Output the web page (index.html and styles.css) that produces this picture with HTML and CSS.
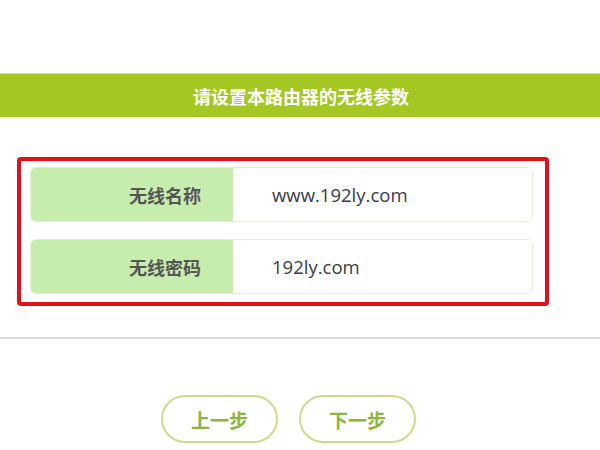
FILE: index.html
```html
<!DOCTYPE html>
<html lang="zh-CN">
<head>
<meta charset="utf-8">
<link rel="stylesheet" href="styles.css">
</head>
<body>
<div class="page">
  <div class="header">请设置本路由器的无线参数</div>
  <div class="frame">
    <div class="row">
      <div class="label">无线名称</div>
      <div class="value">www.192ly.com</div>
    </div>
    <div class="row">
      <div class="label">无线密码</div>
      <div class="value">192ly.com</div>
    </div>
  </div>
  <div class="sep"></div>
  <div class="buttons">
    <div class="btn">上一步</div>
    <div class="btn">下一步</div>
  </div>
</div>
</body>
</html>
```
FILE: styles.css
```css
html, body {
  margin: 0;
  padding: 0;
  background: #ffffff;
}
.page {
  width: 600px;
  height: 450px;
  overflow: hidden;
  padding-top: 73px;
  box-sizing: border-box;
  font-family: "Noto Sans CJK SC", "Noto Sans", sans-serif;
}
.header {
  height: 44px;
  background: #a5c722;
  border-top: 1px solid #cfe08e;
  box-sizing: border-box;
  color: #ffffff;
  font-weight: bold;
  font-size: 18px;
  display: flex;
  align-items: center;
  justify-content: center;
  padding-left: 2px;
}
.frame {
  margin: 40px 0 0 17px;
  width: 532px;
  box-sizing: border-box;
  border: 4px solid #e0101a;
  border-radius: 4px;
  padding: 6px 12px 8px 9px;
  display: flex;
  flex-direction: column;
  gap: 17px;
}
.row {
  display: flex;
  height: 55px;
  box-sizing: border-box;
  border: 1px solid #e3eedb;
  border-radius: 6px;
  overflow: hidden;
}
.label {
  width: 202px;
  background: #c6edae;
  color: #555555;
  font-weight: bold;
  font-size: 18px;
  display: flex;
  align-items: center;
  justify-content: flex-end;
  padding-right: 32px;
  box-sizing: border-box;
}
.value {
  flex: 1;
  background: #ffffff;
  color: #3a3a48;
  font-family: "Open Sans", "Noto Sans", sans-serif;
  font-size: 18.5px;
  display: flex;
  align-items: center;
  padding-left: 39px;
}
.sep {
  margin-top: 31px;
  height: 2px;
  background: #dcdcdc;
}
.buttons {
  margin-top: 56px;
  display: flex;
  justify-content: center;
  gap: 21px;
  padding-left: 77px;
  padding-right: 100px;
}
.btn {
  width: 117px;
  height: 48px;
  box-sizing: border-box;
  border: 2px solid #c9dc8c;
  border-radius: 24px;
  color: #8db53a;
  font-weight: bold;
  font-size: 19px;
  display: flex;
  align-items: center;
  justify-content: center;
}
```
